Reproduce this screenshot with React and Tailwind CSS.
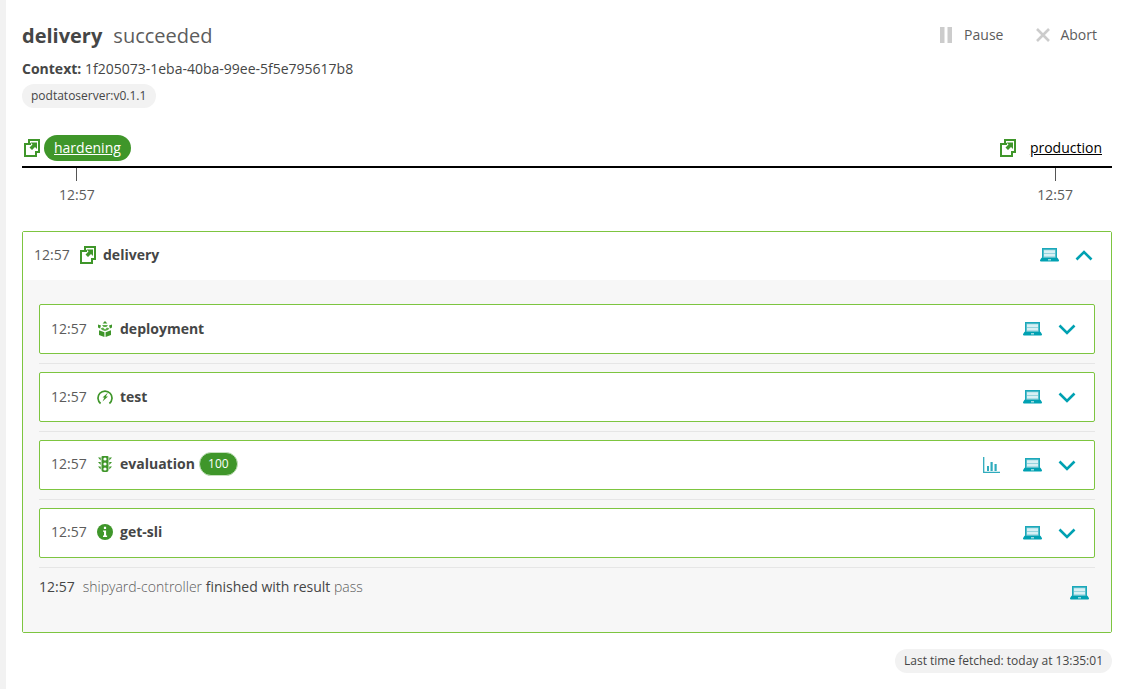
import React from 'react';

const Sequence = ({ className = '' }) => (
    <svg viewBox="0 0 16 18" className={`w-4 h-[18px] shrink-0 ${className}`}>
        <path d="M5 4V1h10v12h-3" fill="none" stroke="#3f962a" strokeWidth="2" />
        <path d="M7 5H1v12h11v-5" fill="none" stroke="#3f962a" strokeWidth="2" />
        <path d="M6.5 3.5H13V10l-2-2-3 3-2.5-2.5 3-3z" fill="#3f962a" />
    </svg>
);

const Laptop = () => (
    <svg viewBox="0 0 19 14" className="w-[19px] h-[14px]">
        <path d="M2.7 .7h13.6v10.6H2.7z" fill="#7fcbd6" stroke="#1aa8ba" strokeWidth="1.4" />
        <path d="M4 2.2h11v2.8H4zM4 5.8h11v2.8H4z" fill="#d8f0f4" />
        <path d="M1.5 9.8h16L19 12.2v.4q0 1-1 1H1q-1 0-1-1v-.4z" fill="#00a1b2" />
        <path d="M8 11.4h3v.9H8z" fill="#fff" />
    </svg>
);

const Chevron = ({ up }) => (
    <svg viewBox="0 0 18 11" className="w-[18px] h-[11px]">
        <path d={up ? 'M1.5 9.5L9 2l7.5 7.5' : 'M1.5 1.5L9 9l7.5-7.5'} fill="none" stroke="#00a1b2" strokeWidth="2.6" />
    </svg>
);

const Chart = () => (
    <svg viewBox="0 0 17 16" className="w-[17px] h-4">
        <path d="M.7 0v15.3H17" fill="none" stroke="#2fabbd" strokeWidth="1.3" />
        <path d="M4 9h2v5H4zM7.5 5h2.2v9H7.5zM11.5 7h2.2v7h-2.2z" fill="#2fabbd" />
    </svg>
);

const Deployment = () => (
    <svg viewBox="0 0 16 16" className="w-4 h-4">
        <path d="M8 0l2.4 2.6H5.6zM1 3.5l3 1 -1 3-2-1zM15 3.5l-3 1 1 3 2-1z" fill="#3f962a" />
        <path d="M5 4h6l-1.6 2h-2.8zM3.6 7.5L6 6.5l2 2 2-2 2.4 1-1.4 1.5-3 1-3-1z" fill="#5fae4b" />
        <path d="M2 9.2l5.4 2v4.8L2 14zM14 9.2l-5.4 2v4.8L14 14z" fill="#3f962a" />
    </svg>
);

const Test = () => (
    <svg viewBox="0 0 16 16" className="w-4 h-4">
        <path d="M3.6 14.5A7 7 0 1 1 12.4 14.5" fill="none" stroke="#3f962a" strokeWidth="1.7" />
        <path d="M11 3.5L8.8 7.5H11L5.5 12.5 7.4 8.5H5.5z" fill="#3f962a" />
    </svg>
);

const Evaluation = () => (
    <svg viewBox="0 0 16 18" className="w-4 h-[18px]">
        <path d="M5.5 1h5q1 0 1 1v13q0 2-2 2h-3q-2 0-2-2V2q0-1 1-1z" fill="#3f962a" />
        <path d="M1 2.5h2.7v3zM15 2.5h-2.7v3zM1 7h2.7v3zM15 7h-2.7v3zM1 11.5h2.7v3zM15 11.5h-2.7v3z" fill="#3f962a" />
        <circle cx="8" cy="4" r="1.6" fill="#fff" />
        <circle cx="8" cy="9" r="1.6" fill="#fff" />
        <circle cx="8" cy="14" r="1.6" fill="#fff" />
    </svg>
);

const Info = () => (
    <svg viewBox="0 0 16 16" className="w-4 h-4">
        <circle cx="8" cy="8" r="8" fill="#3f962a" />
        <path d="M6.9 2.8h2.2V5H6.9zM6 6.4h3.1v5.2h1v1.4H6v-1.4h1V7.8H6z" fill="#fff" />
    </svg>
);

const tasks = [
    { name: 'deployment', icon: <Deployment />, leftClass: '' },
    { name: 'test', icon: <Test />, leftClass: '' },
    { name: 'evaluation', icon: <Evaluation />, score: 100, leftClass: 'mb-[2px]' },
    { name: 'get-sli', icon: <Info />, leftClass: 'mb-[2px]' },
];

function TaskRow({ task }) {
    return (
        <div className="h-[50px] flex items-center pl-[11px] pr-[18px] bg-white border border-[#7dc540] rounded-[2px]">
            <div className={`flex items-center ${task.leftClass}`}>
                <span className="w-[35px] text-[#5c5c5c]">12:57</span>
                <span className="ml-[11px] w-4 flex justify-center">{task.icon}</span>
                <span className="ml-[7px] font-bold text-[#454646]">{task.name}</span>
                {task.score && (
                    <span className="ml-1 h-[24px] w-[39px] flex items-center justify-center rounded-full bg-[#3f962a] border border-[#c5e0bd] text-white text-xs">
                        {task.score}
                    </span>
                )}
            </div>
            <div className="ml-auto flex items-center">
                {task.score && <span className="mr-[23px] flex"><Chart /></span>}
                <span className="flex mr-[16px]"><Laptop /></span>
                <Chevron />
            </div>
        </div>
    );
}

export default function App() {
    return (
        <div className="min-h-[689px] h-[689px] overflow-hidden bg-white border-l-[6px] border-[#f2f2f2] text-[14px] leading-[20px] text-[#454646] font-['Open_Sans',sans-serif]">
            <div className="pl-4 pr-[9px]">
                <div className="flex justify-between pt-[22px]">
                    <h1 className="text-[20px] leading-[28px]">
                        <span className="font-bold">delivery</span>
                        <span className="ml-[11px] text-[#5c5c5c]">succeeded</span>
                    </h1>
                    <div className="flex items-center h-[26px] pr-[15px]">
                        <svg viewBox="0 0 12 16" className="w-3 h-4"><path d="M0 0h4.5v16H0zM7.5 0H12v16H7.5z" fill="#cccccc" /></svg>
                        <span className="ml-3 text-[#5c5c5c]">Pause</span>
                        <svg viewBox="0 0 14 14" className="ml-[33px] w-[14px] h-[14px]"><path d="M1 1l12 12M13 1L1 13" stroke="#cccccc" strokeWidth="2.6" /></svg>
                        <span className="ml-[10px] text-[#5c5c5c]">Abort</span>
                    </div>
                </div>
                <p className="mt-[9px]"><span className="font-bold">Context:</span> 1f205073-1eba-40ba-99ee-5f5e795617b8</p>
                <span className="mt-[5px] inline-flex items-center h-6 pl-[9px] pr-[10px] rounded-full bg-[#f2f2f2] text-xs text-[#454646]">podtatoserver:v0.1.1</span>

                <div className="mt-[27px] flex items-center justify-between h-[26px] pb-[5px] pl-[2px] pr-[10px] border-b-2 border-black box-content">
                    <div className="flex items-center gap-[4px]">
                        <Sequence />
                        <span className="h-[26px] px-[10px] flex items-center rounded-full bg-[#3f962a] text-white underline">hardening</span>
                    </div>
                    <div className="flex items-center gap-[14px]">
                        <Sequence />
                        <span className="text-black underline">production</span>
                    </div>
                </div>
                <div className="flex justify-between pl-[37px] pr-[39px] text-[#5c5c5c]">
                    <div className="flex flex-col items-center"><span className="w-px h-[13px] bg-[#555555]" /><span className="mt-1">12:57</span></div>
                    <div className="flex flex-col items-center"><span className="w-px h-[13px] bg-[#555555]" /><span className="mt-1">12:57</span></div>
                </div>

                <div className="mt-[26px] border border-[#7dc540] rounded-[2px]">
                    <div className="h-[48px] flex items-center pl-[11px] pr-[18px] pb-[2px] bg-white">
                        <span className="w-[36px] text-[#5c5c5c]">12:57</span>
                        <span className="ml-[10px] flex"><Sequence /></span>
                        <span className="ml-[7px] font-bold">delivery</span>
                        <div className="ml-auto flex items-center">
                            <span className="flex mr-[16px]"><Laptop /></span>
                            <Chevron up />
                        </div>
                    </div>
                    <div className="bg-[#f7f7f7] px-4 pt-6 h-[352px]">
                        {tasks.map((task) => (
                            <div key={task.name} className="pb-[9px] mb-[8px] border-b border-[#e6e6e6]">
                                <TaskRow task={task} />
                            </div>
                        ))}
                        <div className="flex justify-between pr-[6px] pt-[1px]">
                            <p>
                                <span className="text-[#454646]">12:57</span>
                                <span className="ml-2 font-light text-[#5c5c5c]">shipyard-controller</span>{' '}
                                <span>finished with result</span>{' '}
                                <span className="font-light text-[#5c5c5c]">pass</span>
                            </p>
                            <span className="flex mt-[9px]"><Laptop /></span>
                        </div>
                    </div>
                </div>

                <div className="mt-[16px] flex justify-end">
                    <span className="h-6 px-[9px] flex items-center rounded-full bg-[#f2f2f2] text-xs">Last time fetched: today at 13:35:01</span>
                </div>
            </div>
        </div>
    );
}
